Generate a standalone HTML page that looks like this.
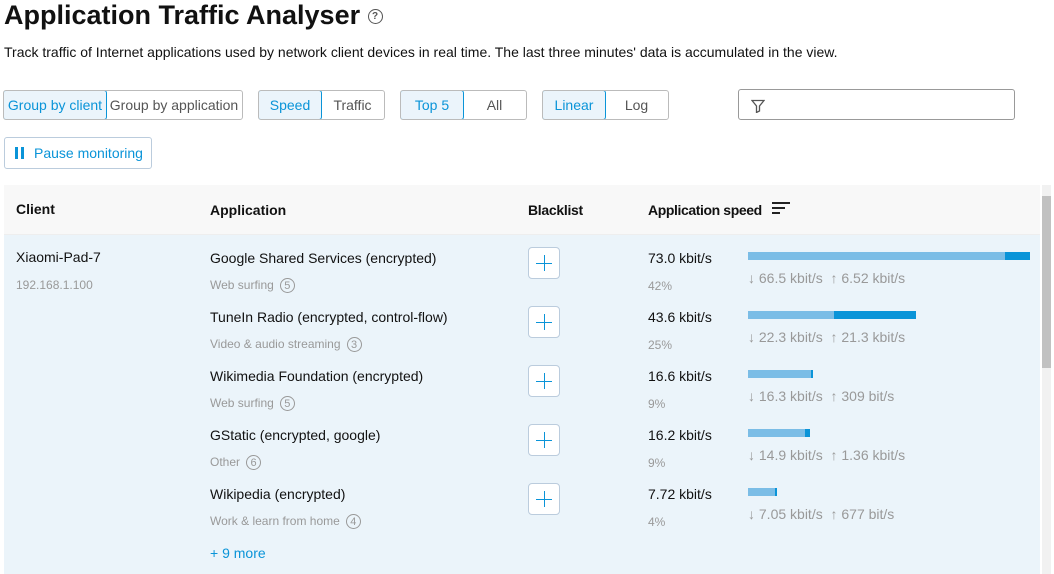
<!DOCTYPE html><html><head><style>
body{margin:0;width:1054px;height:574px;overflow:hidden;background:#fff;font-family:"Liberation Sans",sans-serif;position:relative;color:#111}
.a{position:absolute;white-space:nowrap}
.seg{position:absolute;top:90px;height:30px;display:flex;border:1px solid #bbb;border-radius:3px;box-sizing:border-box;font-size:14px;overflow:hidden}
.seg div{display:flex;align-items:center;justify-content:center;color:#555;box-sizing:border-box}
.seg .on{background:#ebf4fb;color:#0a94d8;border:1px solid #0a94d8;margin:-1px;border-radius:3px}
.pl{position:absolute;left:528px;width:32px;height:32px;border:1px solid #bcd;border-radius:4px;background:#fff;box-sizing:border-box}
.pl:after{content:"";position:absolute;left:7px;top:14.5px;width:16px;height:1.5px;background:#0a94d8}
.pl:before{content:"";position:absolute;left:14.5px;top:7px;width:1.5px;height:16px;background:#0a94d8}
.an{font-size:14px;color:#111}.cat{font-size:12px;color:#999}
.num{display:inline-block;width:15px;height:15px;border:1px solid #999;border-radius:50%;font-size:11px;text-align:center;line-height:14px;margin-left:6px;box-sizing:border-box;vertical-align:middle}
.sp{font-size:14px}.pc{font-size:12px;color:#999}.rt{font-size:14px;color:#999}
.bl{position:absolute;height:8px;background:#7bbde6}.bd{position:absolute;height:8px;background:#0a94d8}
</style></head><body>
<div class="a" style="left:4px;top:0;font-size:27px;font-weight:bold">Application Traffic Analyser <span style="display:inline-block;width:13px;height:13px;border:1.5px solid #555;border-radius:50%;font-size:10px;line-height:13px;text-align:center;vertical-align:middle;color:#555;font-weight:bold">?</span></div>
<div class="a" style="left:4px;top:44px;font-size:14px">Track traffic of Internet applications used by network client devices in real time. The last three minutes' data is accumulated in the view.</div>
<div class="seg" style="left:3px;width:240px"><div class="on" style="width:104px">Group by client</div><div style="width:136px">Group by application</div></div>
<div class="seg" style="left:258px;width:127px"><div class="on" style="width:64px">Speed</div><div style="width:63px">Traffic</div></div>
<div class="seg" style="left:400px;width:127px"><div class="on" style="width:64px">Top 5</div><div style="width:63px">All</div></div>
<div class="seg" style="left:542px;width:127px"><div class="on" style="width:64px">Linear</div><div style="width:63px">Log</div></div>
<div class="a" style="left:738px;top:89px;width:277px;height:31px;border:1px solid #999;border-radius:3px;box-sizing:border-box"><svg style="position:absolute;left:12px;top:9px" width="14" height="14" viewBox="0 0 14 14"><path d="M1 1.5h12l-4.5 5.5v5l-3 1.5v-6.5z" fill="none" stroke="#555" stroke-width="1.3"/></svg></div>
<div class="a" style="left:4px;top:137px;width:148px;height:32px;border:1px solid #bcd;border-radius:3px;box-sizing:border-box;color:#0a94d8;font-size:14px;line-height:30px;padding-left:29px"><span style="position:absolute;left:10px;top:9px;width:3px;height:12px;background:#0a94d8"></span><span style="position:absolute;left:16px;top:9px;width:3px;height:12px;background:#0a94d8"></span>Pause monitoring</div>
<div class="a" style="left:4px;top:185px;width:1036px;height:49px;background:#f8f8f8;border-bottom:1px solid #eee"></div>
<div class="a" style="left:4px;top:235px;width:1036px;height:339px;background:#ebf4fa"></div>
<div class="a" style="left:1042px;top:185px;width:9px;height:389px;background:#f1f1f1"></div>
<div class="a" style="left:1042px;top:196px;width:9px;height:172px;background:#c1c1c1"></div>
<div class="a" style="left:16px;top:201px;font-size:14px;font-weight:bold">Client</div>
<div class="a" style="left:210px;top:202px;font-size:14px;font-weight:bold">Application</div>
<div class="a" style="left:528px;top:202px;font-size:14px;font-weight:bold;letter-spacing:-0.3px">Blacklist</div>
<div class="a" style="left:648px;top:202px;font-size:14px;font-weight:bold;letter-spacing:-0.4px">Application speed</div>
<svg class="a" style="left:772px;top:202px" width="18" height="12"><rect x="0" y="0" width="18" height="2" fill="#222"/><rect x="0" y="5" width="13" height="2" fill="#222"/><rect x="0" y="10" width="8" height="2" fill="#222"/></svg>
<div class="a" style="left:16px;top:249px;font-size:14px">Xiaomi-Pad-7</div>
<div class="a" style="left:16px;top:278px;font-size:12px;color:#999">192.168.1.100</div>

<div class="a an" style="left:210px;top:250px">Google Shared Services (encrypted)</div><div class="a cat" style="left:210px;top:278px">Web surfing<span class="num">5</span></div>
<div class="pl" style="top:247px"></div>
<div class="a sp" style="left:648px;top:250px">73.0 kbit/s</div><div class="a pc" style="left:648px;top:279px">42%</div>
<div class="bl" style="left:748px;top:252px;width:257px"></div><div class="bd" style="left:1005px;top:252px;width:25px"></div>
<div class="a rt" style="left:748px;top:270px">↓ 66.5 kbit/s &nbsp;↑ 6.52 kbit/s</div>

<div class="a an" style="left:210px;top:309px">TuneIn Radio (encrypted, control-flow)</div><div class="a cat" style="left:210px;top:337px">Video &amp; audio streaming<span class="num">3</span></div>
<div class="pl" style="top:306px"></div>
<div class="a sp" style="left:648px;top:309px">43.6 kbit/s</div><div class="a pc" style="left:648px;top:338px">25%</div>
<div class="bl" style="left:748px;top:311px;width:86px"></div><div class="bd" style="left:834px;top:311px;width:82px"></div>
<div class="a rt" style="left:748px;top:329px">↓ 22.3 kbit/s &nbsp;↑ 21.3 kbit/s</div>

<div class="a an" style="left:210px;top:368px">Wikimedia Foundation (encrypted)</div><div class="a cat" style="left:210px;top:396px">Web surfing<span class="num">5</span></div>
<div class="pl" style="top:365px"></div>
<div class="a sp" style="left:648px;top:368px">16.6 kbit/s</div><div class="a pc" style="left:648px;top:397px">9%</div>
<div class="bl" style="left:748px;top:370px;width:63px"></div><div class="bd" style="left:811px;top:370px;width:2px"></div>
<div class="a rt" style="left:748px;top:388px">↓ 16.3 kbit/s &nbsp;↑ 309 bit/s</div>

<div class="a an" style="left:210px;top:427px">GStatic (encrypted, google)</div><div class="a cat" style="left:210px;top:455px">Other<span class="num">6</span></div>
<div class="pl" style="top:424px"></div>
<div class="a sp" style="left:648px;top:427px">16.2 kbit/s</div><div class="a pc" style="left:648px;top:456px">9%</div>
<div class="bl" style="left:748px;top:429px;width:57px"></div><div class="bd" style="left:805px;top:429px;width:5px"></div>
<div class="a rt" style="left:748px;top:447px">↓ 14.9 kbit/s &nbsp;↑ 1.36 kbit/s</div>

<div class="a an" style="left:210px;top:486px">Wikipedia (encrypted)</div><div class="a cat" style="left:210px;top:514px">Work &amp; learn from home<span class="num">4</span></div>
<div class="pl" style="top:483px"></div>
<div class="a sp" style="left:648px;top:486px">7.72 kbit/s</div><div class="a pc" style="left:648px;top:515px">4%</div>
<div class="bl" style="left:748px;top:488px;width:27px"></div><div class="bd" style="left:775px;top:488px;width:2px"></div>
<div class="a rt" style="left:748px;top:506px">↓ 7.05 kbit/s &nbsp;↑ 677 bit/s</div>

<div class="a" style="left:210px;top:545px;font-size:14px;color:#0a94d8">+ 9 more</div>
</body></html>
